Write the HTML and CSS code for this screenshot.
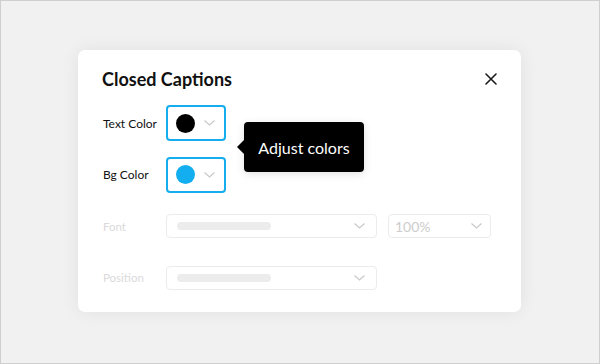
FILE: index.html
```html
<!DOCTYPE html>
<html>
<head>
<meta charset="utf-8">
<link rel="stylesheet" href="styles.css">
</head>
<body>
<div class="stage">
  <div class="modal">
    <div class="header">
      <h1 class="title">Closed Captions</h1>
      <svg class="close" width="12" height="12" viewBox="0 0 12 12"><path d="M1 1L11 11M11 1L1 11" stroke="#1a1a1a" stroke-width="1.6" stroke-linecap="round"/></svg>
    </div>
    <div class="form">
      <div class="label">Text Color</div>
      <div class="controls">
        <div class="swatch"><span class="dot dot-black"></span><svg class="chev" width="11" height="6" viewBox="0 0 11 6"><path d="M0.5 0.5L5.5 5L10.5 0.5" fill="none" stroke="#c9c9c9" stroke-width="1.2"/></svg></div>
      </div>
      <div class="label">Bg Color</div>
      <div class="controls">
        <div class="swatch"><span class="dot dot-blue"></span><svg class="chev" width="11" height="6" viewBox="0 0 11 6"><path d="M0.5 0.5L5.5 5L10.5 0.5" fill="none" stroke="#c9c9c9" stroke-width="1.2"/></svg></div>
      </div>
      <div class="label muted">Font</div>
      <div class="controls">
        <div class="select wide"><span class="bar"></span><svg class="chev" width="11" height="6" viewBox="0 0 11 6"><path d="M0.5 0.5L5.5 5L10.5 0.5" fill="none" stroke="#c9c9c9" stroke-width="1.2"/></svg></div>
        <div class="select narrow"><span class="val">100%</span><svg class="chev" width="11" height="6" viewBox="0 0 11 6"><path d="M0.5 0.5L5.5 5L10.5 0.5" fill="none" stroke="#c9c9c9" stroke-width="1.2"/></svg></div>
      </div>
      <div class="label muted">Position</div>
      <div class="controls">
        <div class="select wide"><span class="bar"></span><svg class="chev" width="11" height="6" viewBox="0 0 11 6"><path d="M0.5 0.5L5.5 5L10.5 0.5" fill="none" stroke="#c9c9c9" stroke-width="1.2"/></svg></div>
      </div>
    </div>
    <div class="tooltip">Adjust colors</div>
  </div>
</div>
</body>
</html>
```
FILE: styles.css
```css
* { box-sizing: border-box; }
html, body { margin: 0; padding: 0; }
body {
  font-family: Lato, "Open Sans", sans-serif;
  background: #f0f0f0;
}
.stage {
  width: 600px;
  height: 364px;
  border: 1px solid #cfcfcf;
  background: #f1f1f1;
  padding: 0 1px 2px 0;
  display: flex;
  align-items: center;
  justify-content: center;
}
.modal {
  position: relative;
  width: 443px;
  height: 262px;
  background: #fff;
  border-radius: 7px;
  box-shadow: 0 0 18px rgba(0,0,0,0.07);
  padding: 17px 24px 0 24px;
}
.header {
  display: flex;
  align-items: center;
  justify-content: space-between;
  height: 24px;
}
.title {
  margin: 0;
  font-size: 18px;
  font-weight: 700;
  color: #111;
  line-height: 24px;
}
.close { display: block; }
.form {
  margin-top: 14px;
  display: grid;
  grid-template-columns: 64px 1fr;
  grid-auto-rows: 36px;
  row-gap: 15.5px;
  align-items: center;
}
.label {
  font-size: 12px;
  color: #111;
  padding-left: 1px;
}
.label.muted { color: #dadada; font-size: 11.5px; }
.controls {
  display: flex;
  align-items: center;
  gap: 11px;
}
.swatch {
  width: 60px;
  height: 36px;
  border: 2px solid #16adef;
  border-radius: 4px;
  display: flex;
  align-items: center;
  padding-left: 8px;
  gap: 9px;
}
.dot {
  width: 19px;
  height: 19px;
  border-radius: 50%;
  display: block;
}
.dot-black { background: #000; }
.dot-blue { background: #13aef0; }
.chev { display: block; }
.select {
  height: 24px;
  border: 1px solid #ececec;
  border-radius: 4px;
  display: flex;
  align-items: center;
  justify-content: space-between;
  padding: 0 11px 0 10px;
}
.select.wide { width: 211px; }
.select.narrow { width: 103px; padding-left: 6px; padding-right: 8px; }
.bar {
  display: block;
  width: 94px;
  height: 8px;
  border-radius: 4px;
  background: #ececec;
}
.val {
  font-size: 14px;
  color: #cdcdcd;
}
.tooltip {
  position: absolute;
  left: 166px;
  top: 72px;
  width: 120px;
  height: 50px;
  background: #000;
  color: #fff;
  border-radius: 4px;
  font-size: 16px;
  display: flex;
  align-items: center;
  justify-content: center;
  box-shadow: 0 2px 8px rgba(0,0,0,0.12);
}
.tooltip::before {
  content: "";
  position: absolute;
  left: -7px;
  top: 18px;
  border-top: 7px solid transparent;
  border-bottom: 7px solid transparent;
  border-right: 7px solid #000;
}
```
